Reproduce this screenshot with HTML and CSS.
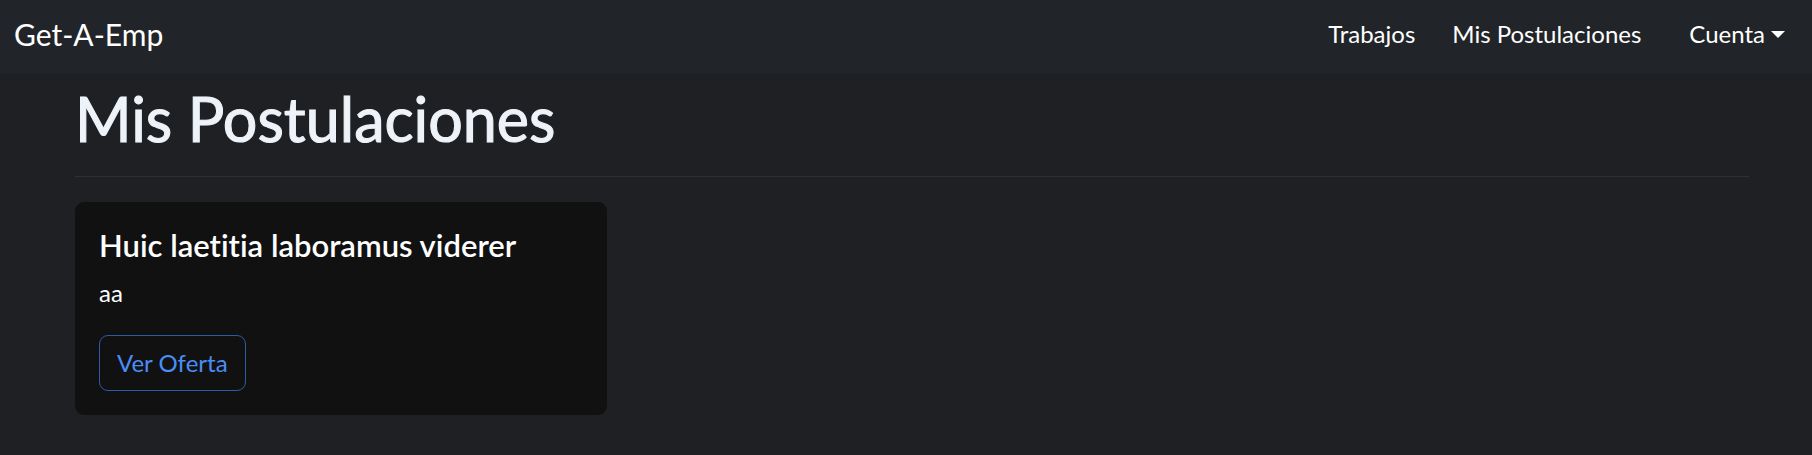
FILE: index.html
```html
<!DOCTYPE html>
<html lang="es">
<head>
<meta charset="utf-8">
<title>Mis Postulaciones</title>
<link rel="stylesheet" href="styles.css">
</head>
<body>
<nav class="navbar">
  <a class="brand" href="#">Get-A-Emp</a>
  <ul class="nav">
    <li class="nav-item"><a class="nav-link" href="#">Trabajos</a></li>
    <li class="nav-item"><a class="nav-link" href="#">Mis Postulaciones</a></li>
    <li class="nav-item nav-dropdown"><a class="nav-link dropdown-toggle" href="#">Cuenta</a></li>
  </ul>
</nav>
<main class="container">
  <h1 class="page-title">Mis Postulaciones</h1>
  <hr class="divider">
  <div class="cards">
    <div class="card">
      <h5 class="card-title">Huic laetitia laboramus viderer</h5>
      <p class="card-text">aa</p>
      <a class="btn-outline" href="#">Ver Oferta</a>
    </div>
  </div>
</main>
</body>
</html>
```
FILE: styles.css
```css
* { box-sizing: border-box; }
html, body { margin: 0; padding: 0; }
body {
  background: #1f2023;
  color: #dee2e6;
  font-family: "Lato", "Noto Sans", sans-serif;
  font-size: 24px;
  line-height: 1.5;
  min-height: 455px;
  font-variant-ligatures: none;
}
a { text-decoration: none; }

.navbar {
  display: flex;
  align-items: center;
  justify-content: space-between;
  height: 74px;
  padding: 0 15px 6px 14px;
  background: #212529;
}
.brand {
  color: #ffffff;
  font-size: 30px;
  line-height: 1.5;
}
.nav {
  display: flex;
  align-items: center;
  list-style: none;
  margin: 0;
  padding: 0;
}
.nav-item + .nav-item { margin-left: 13px; }
.nav-dropdown { margin-left: 24px !important; }
.nav-link {
  display: block;
  padding: 0 12px;
  color: #ffffff;
  font-size: 24px;
}
.dropdown-toggle::after {
  content: "";
  display: inline-block;
  margin-left: 6px;
  vertical-align: 5px;
  border-top: 7px solid #ffffff;
  border-left: 7px solid transparent;
  border-right: 7px solid transparent;
}

.container {
  padding: 0 63px 0 75px;
}
.page-title {
  margin: 8px 0 0 0;
  font-size: 61px;
  font-weight: 400;
  line-height: 1.2;
  color: #eef2f9;
  -webkit-text-stroke: 1.1px #eef2f9;
}
.divider {
  margin: 21px 0 25px 0;
  border: 0;
  border-top: 1px solid #2f3034;
  opacity: 1;
}
.cards { display: flex; }
.card {
  width: 532px;
  padding: 25px 24px 24px 24px;
  background: #111111;
  border-radius: 9px;
}
.card-title {
  margin: 0 0 12px 0;
  font-size: 31px;
  font-weight: 600;
  line-height: 36px;
  color: #ffffff;
}
.card-text {
  margin: 0 0 24px 0;
  color: #ffffff;
}
.btn-outline {
  display: inline-block;
  padding: 9px 17px;
  border: 1px solid #2f5aa6;
  border-radius: 9px;
  color: #4b8df8;
  font-size: 24px;
  line-height: 1.5;
}
```
